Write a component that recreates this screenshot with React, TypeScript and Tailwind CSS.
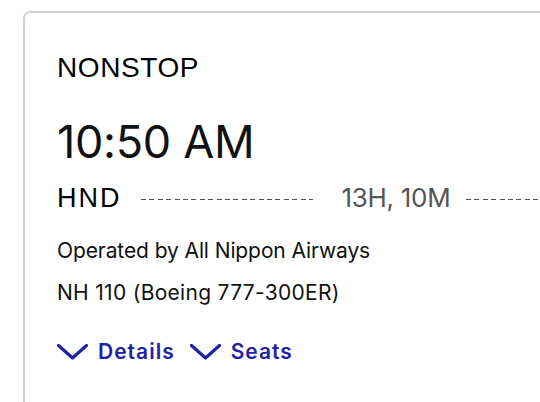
import React from 'react';

const Chevron: React.FC = () => (
  <svg width="31" height="16" viewBox="0 0 31 16" fill="none" className="shrink-0">
    <path d="M1.5 1.5 L15.5 14 L29.5 1.5" stroke="currentColor" strokeWidth="3.2" strokeLinecap="round" strokeLinejoin="round" />
  </svg>
);

const Dashes: React.FC<{ className?: string }> = ({ className }) => (
  <div
    className={`h-px shrink-0 bg-[repeating-linear-gradient(90deg,#555_0_5px,transparent_5px_8.4px)] ${className ?? ''}`}
  />
);

export default function App() {
  return (
    <div className="w-[540px] h-[402px] overflow-hidden bg-white">
      <div className="ml-[23px] mt-[11px] w-[760px] h-[460px] rounded-[7px] border-2 border-[#d2d2d2] pl-[32px] pt-[41px]">
        <div className="font-['Liberation_Sans',Arial,sans-serif] text-[28px] leading-[28px] text-black tracking-[0.6px]">
          NONSTOP
        </div>

        <div className="mt-[37px] font-['Inter',sans-serif] text-[45px] leading-[45px] text-[#111] tracking-[-0.3px]">
          10:50 AM
        </div>

        <div className="mt-[20px] flex items-center h-[28px]">
          <span className="font-['Liberation_Sans',Arial,sans-serif] text-[27px] leading-[28px] text-black tracking-[2px]">
            HND
          </span>
          <Dashes className="ml-[19px] w-[172px] mt-[2px]" />
          <span className="ml-[29px] font-['Inter',sans-serif] text-[26px] leading-[28px] text-[#555] tracking-[-0.3px]">
            13H, 10M
          </span>
          <Dashes className="ml-[16px] w-[172px] mt-[2px]" />
        </div>

        <div className="mt-[25px] font-['Inter',sans-serif] text-[21px] leading-[28px] text-[#111] tracking-[-0.1px]">
          Operated by All Nippon Airways
        </div>
        <div className="mt-[14px] font-['Inter',sans-serif] text-[21px] leading-[28px] text-[#111] tracking-[0.3px]">
          NH 110 (Boeing 777-300ER)
        </div>

        <div className="mt-[31px] flex items-center gap-[15px] font-['Inter',sans-serif] text-[21px] leading-[28px] font-semibold text-[#1f22a8] tracking-[1px]">
          <button className="flex items-center gap-[10px]">
            <Chevron />
            <span>Details</span>
          </button>
          <button className="flex items-center gap-[10px]">
            <Chevron />
            <span>Seats</span>
          </button>
        </div>
      </div>
    </div>
  );
}
